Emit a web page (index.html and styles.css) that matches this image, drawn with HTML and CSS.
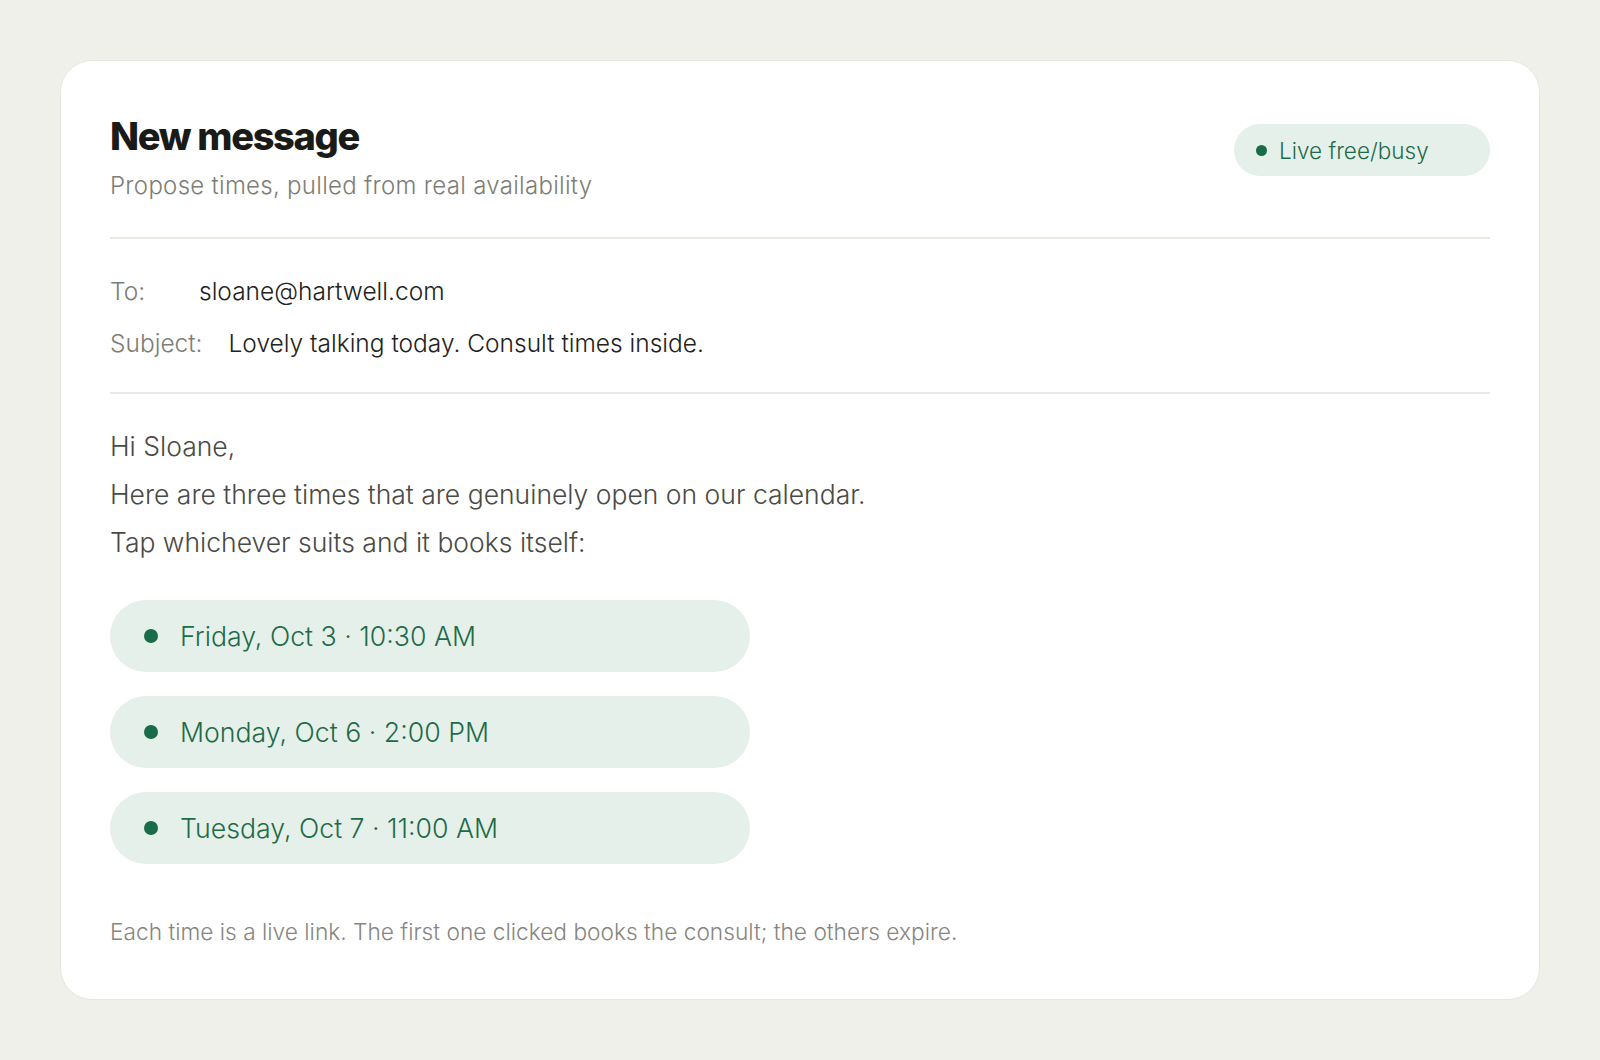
FILE: index.html
```html
<!DOCTYPE html>
<html lang="en">
<head>
    <meta charset="UTF-8">
    <meta name="viewport" content="width=device-width, initial-scale=1.0">
    <title>New message</title>
    <link rel="stylesheet" href="styles.css">
</head>
<body>
    <div class="card">
        <div class="header">
            <div>
                <h1>New message</h1>
                <p class="subtitle">Propose times, pulled from real availability</p>
            </div>
            <div class="badge"><span class="dot"></span>Live free/busy</div>
        </div>

        <div class="fields">
            <div class="field">
                <span class="field-label">To:</span>
                <span class="field-value">sloane@hartwell.com</span>
            </div>
            <div class="field">
                <span class="field-label">Subject:</span>
                <span class="field-value">Lovely talking today. Consult times inside.</span>
            </div>
        </div>

        <div class="body">
            <p>Hi Sloane,</p>
            <p>Here are three times that are genuinely open on our calendar.</p>
            <p>Tap whichever suits and it books itself:</p>
        </div>

        <div class="slots">
            <a class="slot" href="#"><span class="dot"></span>Friday, Oct 3 · 10:30 AM</a>
            <a class="slot" href="#"><span class="dot"></span>Monday, Oct 6 · 2:00 PM</a>
            <a class="slot" href="#"><span class="dot"></span>Tuesday, Oct 7 · 11:00 AM</a>
        </div>

        <p class="note">Each time is a live link. The first one clicked books the consult; the others expire.</p>
    </div>
</body>
</html>
```

FILE: styles.css
```css
body {
    margin: 0;
    padding: 60px;
    background-color: #f0f0eb;
    font-family: Inter, "Noto Sans", sans-serif;
    font-weight: 300;
}
.card {
    background-color: #ffffff;
    border: 1px solid #e8e6e0;
    border-radius: 32px;
    padding: 49px 49px 50px;
    height: 940px;
    box-sizing: border-box;
}
.header {
    display: flex;
    justify-content: space-between;
    align-items: flex-start;
    padding-bottom: 36px;
    border-bottom: 2px solid #ebe9e4;
}
h1 {
    margin: 0;
    padding-top: 3px;
    font-size: 38px;
    font-weight: 800;
    letter-spacing: -0.035em;
    color: #1a1a17;
    line-height: 46px;
}
.subtitle {
    margin: 12px 0 0;
    font-size: 24px;
    line-height: 30px;
    letter-spacing: 0.012em;
    color: #7d7d76;
}
.badge {
    display: flex;
    align-items: center;
    gap: 12px;
    margin-top: 14px;
    height: 52px;
    width: 256px;
    box-sizing: border-box;
    padding: 0 22px;
    border-radius: 26px;
    background-color: #e6f0ea;
    color: #1f6b48;
    font-size: 22.5px;
}
.badge .dot {
    width: 11px;
    height: 11px;
}
.dot {
    display: inline-block;
    border-radius: 50%;
    background-color: #1a6b47;
    flex-shrink: 0;
}
.fields {
    padding: 26px 0 23px;
    border-bottom: 2px solid #ebe9e4;
}
.field {
    display: flex;
    gap: 26px;
    font-size: 24.5px;
    line-height: 52px;
}
.field-label {
    min-width: 63px;
    color: #7d7d76;
}
.field-value {
    color: #222220;
}
.body {
    padding-top: 28px;
}
.body p {
    margin: 0;
    font-size: 26.5px;
    line-height: 48px;
    color: #4a4a45;
}
.slots {
    display: flex;
    flex-direction: column;
    gap: 24px;
    margin-top: 34px;
}
.slot {
    display: flex;
    align-items: center;
    gap: 22px;
    width: 640px;
    height: 72px;
    box-sizing: border-box;
    padding: 0 34px;
    border-radius: 36px;
    background-color: #e6f0ea;
    color: #1f6b48;
    font-size: 26.7px;
    text-decoration: none;
}
.slot .dot {
    width: 14px;
    height: 14px;
}
.note {
    margin: 54px 0 0;
    font-size: 22.7px;
    color: #86867f;
}
```
